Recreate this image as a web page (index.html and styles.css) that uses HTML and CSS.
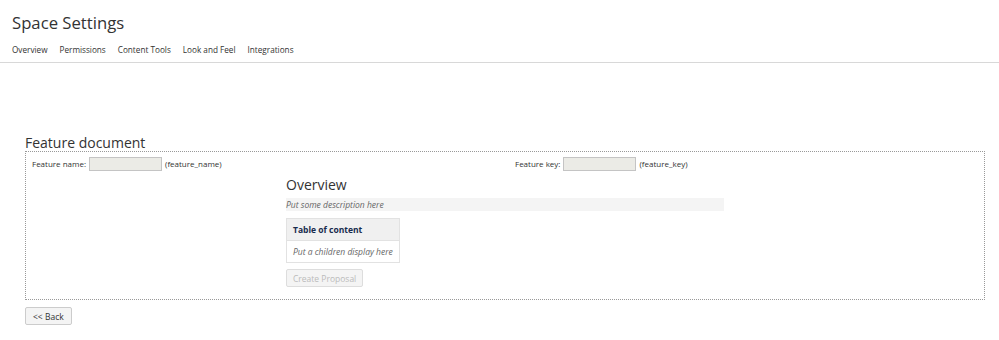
FILE: index.html
```html
<!DOCTYPE html>
<html lang="en">
<head>
    <meta charset="UTF-8">
    <title>Space Settings</title>
    <link rel="stylesheet" href="styles.css">
</head>
<body>
    <header class="page-header">
        <h1>Space Settings</h1>
        <nav class="tabs">
            <a href="#">Overview</a>
            <a href="#">Permissions</a>
            <a href="#">Content Tools</a>
            <a href="#">Look and Feel</a>
            <a href="#">Integrations</a>
        </nav>
    </header>

    <main class="content">
        <h2 class="doc-title">Feature document</h2>
        <div class="doc-box">
            <div class="keys">
                <div class="field">
                    <label>Feature name:</label>
                    <input type="text" class="field-input">
                    <span>(feature_name)</span>
                </div>
                <div class="field field-right">
                    <label>Feature key:</label>
                    <input type="text" class="field-input">
                    <span>(feature_key)</span>
                </div>
            </div>

            <section class="overview">
                <h3>Overview</h3>
                <div class="description">Put some description here</div>
                <table class="toc">
                    <tr><th>Table of content</th></tr>
                    <tr><td>Put a children display here</td></tr>
                </table>
                <button class="btn" disabled>Create Proposal</button>
            </section>
        </div>
        <button class="btn back">&lt;&lt; Back</button>
    </main>
</body>
</html>
```

FILE: styles.css
```css
body {
    margin: 0;
    font-family: 'Open Sans', 'Noto Sans', sans-serif;
    color: #333;
    background: #fff;
}

.page-header {
    padding: 11px 12px 0;
    border-bottom: 1px solid #d8d8d8;
}

.page-header h1 {
    margin: 0;
    font-size: 16.7px;
    font-weight: 400;
    line-height: 24px;
    color: #333;
}

.tabs {
    display: flex;
    gap: 12px;
    padding: 9px 0 6px;
}

.tabs a {
    font-size: 8.2px;
    line-height: 12px;
    color: #333;
    text-decoration: none;
}

.content {
    padding: 71px 14px 0 25px;
}

.doc-title {
    margin: 0;
    font-size: 14px;
    font-weight: 400;
    line-height: 17px;
    color: #333;
}

.doc-box {
    border: 1px dotted #999;
    padding: 5px 6px 12px;
}

.keys {
    display: grid;
    grid-template-columns: 1fr 1fr;
}

.field {
    display: flex;
    align-items: center;
    gap: 3px;
    font-size: 8px;
    line-height: 14px;
}

.field-right {
    padding-left: 10px;
}

.field-input {
    width: 71px;
    height: 12px;
    padding: 0;
    margin: 0;
    border: 1px solid #c4c4c4;
    background: #ebebe6;
}

.overview {
    width: 438px;
    margin: 4px auto 0;
}

.overview h3 {
    margin: 0;
    font-size: 14px;
    font-weight: 400;
    line-height: 20px;
    color: #333;
}

.description {
    margin-top: 3px;
    background: #f4f4f4;
    font-size: 8.5px;
    font-style: italic;
    line-height: 13px;
    color: #666;
}

.toc {
    margin-top: 7px;
    border-collapse: collapse;
    border: 1px solid #e2e2e2;
    font-size: 8.5px;
}

.toc th {
    text-align: left;
    background: #f0f0f0;
    color: #172b4d;
    height: 21px;
    padding: 0 6px;
    border-bottom: 1px solid #e2e2e2;
}

.toc td {
    height: 21px;
    padding: 0 6px;
    font-style: italic;
    color: #666;
}

.btn {
    display: block;
    margin-top: 6px;
    padding: 0 6px;
    height: 18px;
    font-family: inherit;
    font-size: 8.5px;
    background: #f4f4f4;
    border: 1px solid #ddd;
    border-radius: 2px;
    color: #333;
}

.btn:disabled {
    color: #bbb;
}

.back {
    margin-top: 7px;
    border-color: #ccc;
    padding: 0 7px;
}
```
